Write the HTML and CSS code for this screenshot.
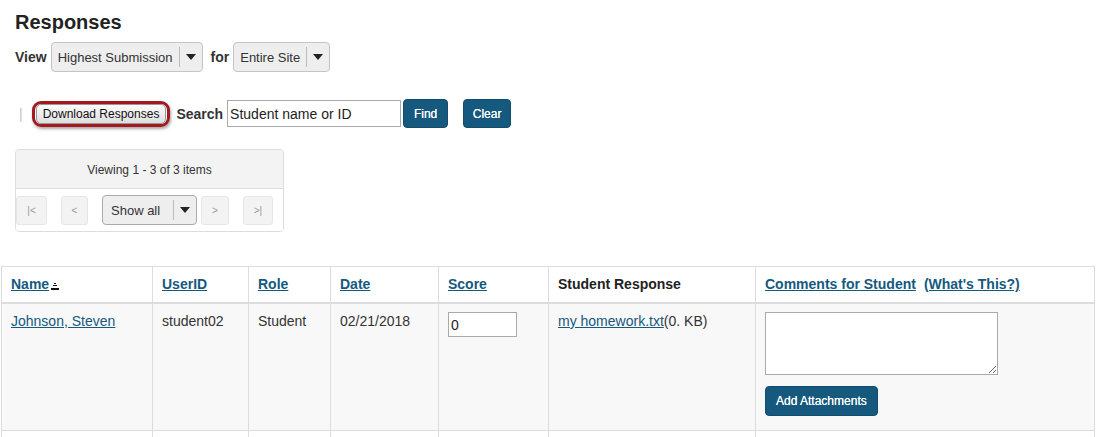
FILE: index.html
```html
<!DOCTYPE html>
<html>
<head>
<meta charset="utf-8">
<title>Responses</title>
<link rel="stylesheet" href="styles.css">
</head>
<body>
<div class="top">
  <h1 class="title">Responses</h1>
  <div class="viewrow">
    <span class="lbl">View</span>
    <div class="sel"><span class="sel-text">Highest Submission</span><span class="sel-arrow"></span></div>
    <span class="lbl">for</span>
    <div class="sel"><span class="sel-text">Entire Site</span><span class="sel-arrow"></span></div>
  </div>
  <div class="actions">
    <span class="sep">|</span>
    <span class="hl"><button class="dl">Download Responses</button></span>
    <span class="lbl search-lbl">Search</span>
    <input class="search" type="text" value="Student name or ID">
    <button class="btn find">Find</button>
    <button class="btn clear">Clear</button>
  </div>
  <div class="pager">
    <div class="pager-head">Viewing 1 - 3 of 3 items</div>
    <div class="pager-nav">
      <span class="pbtn w31">|&lt;</span>
      <span class="pbtn w27">&lt;</span>
      <div class="sel psel"><span class="sel-text">Show all</span><span class="sel-arrow"></span></div>
      <span class="pbtn w28 next">&gt;</span>
      <span class="pbtn w30 last">&gt;|</span>
    </div>
  </div>
</div>
<table class="grid">
  <colgroup>
    <col class="c1"><col class="c2"><col class="c3"><col class="c4"><col class="c5"><col class="c6"><col class="c7">
  </colgroup>
  <thead>
    <tr>
      <th><a href="#">Name</a><svg class="sort" width="8" height="7" viewBox="0 0 8 7"><rect x="3" y="0" width="2" height="1" fill="#111"/><rect x="2" y="2" width="4" height="1" fill="#111"/><rect x="0" y="5" width="8" height="2" fill="#111"/></svg></th>
      <th><a href="#">UserID</a></th>
      <th><a href="#">Role</a></th>
      <th><a href="#">Date</a></th>
      <th><a href="#">Score</a></th>
      <th class="plain">Student Response</th>
      <th><a href="#">Comments for Student</a><a href="#" class="whats">(What's This?)</a></th>
    </tr>
  </thead>
  <tbody>
    <tr class="row">
      <td><a href="#">Johnson, Steven</a></td>
      <td>student02</td>
      <td>Student</td>
      <td>02/21/2018</td>
      <td><input class="score" type="text" value="0"></td>
      <td><a href="#">my homework.txt</a>(0. KB)</td>
      <td><textarea class="comment"></textarea><button class="btn attach">Add Attachments</button></td>
    </tr>
    <tr class="row2">
      <td></td><td></td><td></td><td></td><td></td><td></td><td></td>
    </tr>
  </tbody>
</table>
</body>
</html>
```

FILE: styles.css
```css
html, body {
  margin: 0;
  padding: 0;
  background: #fff;
  font-family: "Liberation Sans", Arial, sans-serif;
  color: #333;
  font-size: 14px;
}

.top {
  padding-left: 15px;
}

.title {
  margin: 10px 0 0;
  font-size: 20px;
  line-height: 24px;
  font-weight: bold;
  color: #222;
}

.viewrow {
  display: flex;
  align-items: center;
  height: 30px;
  margin-top: 8px;
}

.lbl {
  font-weight: bold;
  font-size: 14px;
  color: #333;
  margin-right: 4px;
}

.sel {
  display: inline-flex;
  align-items: center;
  height: 30px;
  box-sizing: border-box;
  border: 1px solid #c4c4c4;
  border-radius: 4px;
  background: #eee;
  font-size: 13px;
  color: #333;
  margin-right: 8px;
  flex-shrink: 0;
}

.sel-text {
  padding: 0 6px;
  white-space: nowrap;
}

.sel-arrow {
  width: 22px;
  height: 20px;
  border-left: 1px solid #bbb;
  display: flex;
  align-items: center;
  justify-content: center;
}

.sel-arrow::after {
  content: "";
  border-left: 5px solid transparent;
  border-right: 5px solid transparent;
  border-top: 6px solid #222;
}

.actions {
  display: flex;
  align-items: center;
  height: 29px;
  margin-top: 27px;
}

.sep {
  color: #c9c0b6;
  font-size: 14px;
  margin-left: 4px;
  margin-right: 9px;
}

.hl {
  display: inline-flex;
  padding: 0 1px;
  border: 3px solid #a2191f;
  border-radius: 9px;
  box-shadow: 1px 2px 3px rgba(0, 0, 0, 0.35);
  margin-right: 6px;
}

.dl {
  font-family: "Liberation Sans", Arial, sans-serif;
  font-size: 12px;
  line-height: 14px;
  padding: 2px 6px;
  border: 1px solid #999;
  border-radius: 5px;
  background: linear-gradient(#fdfdfd, #dedede);
  color: #111;
  margin: 0;
}

.search-lbl {
  margin-right: 4px;
}

.search {
  width: 174px;
  height: 27px;
  box-sizing: border-box;
  border: 1px solid #aaa;
  padding: 0 2px;
  font-family: "Liberation Sans", Arial, sans-serif;
  font-size: 14px;
  color: #222;
  margin: 0 2px 0 0;
}

.btn {
  font-family: "Liberation Sans", Arial, sans-serif;
  font-size: 12px;
  color: #fff;
  background: #15597e;
  border: 1px solid #124d6e;
  border-radius: 4px;
  height: 29px;
  padding: 0 10px;
  margin: 0;
  text-shadow: 0 0 0.4px #fff;
}

.find {
  width: 45px;
  padding: 0;
}

.clear {
  margin-left: 15px;
  width: 48px;
  padding: 0;
}

.pager {
  margin-top: 21px;
  width: 269px;
  box-sizing: border-box;
  border: 1px solid #ddd;
  border-radius: 4px;
  overflow: hidden;
}

.pager-head {
  background: #f3f3f3;
  border-bottom: 1px solid #ddd;
  height: 38px;
  line-height: 40px;
  text-align: center;
  font-size: 12px;
  color: #333;
}

.pager-nav {
  display: flex;
  align-items: center;
  padding: 6px 0 6px;
  background: #fff;
}

.pbtn {
  display: inline-flex;
  align-items: center;
  justify-content: center;
  flex-shrink: 0;
  height: 29px;
  box-sizing: border-box;
  background: #f3f3f3;
  border: 1px solid #e6e6e6;
  border-radius: 3px;
  color: #999;
  font-size: 10px;
  margin-right: 14px;
}

.pbtn.last {
  margin-right: 0;
}

.w31 { width: 31px; }
.w30 { width: 30px; }
.w27 { width: 27px; }
.w28 { width: 28px; }

.psel {
  width: 95px;
  height: 30px;
  border-color: #aaa;
  margin-right: 4px;
}

.psel .sel-text {
  flex: 1;
  padding-left: 8px;
  font-size: 13px;
}

.grid {
  margin: 34px 0 0 1px;
  width: 1093px;
  border-collapse: collapse;
  table-layout: fixed;
  font-size: 14px;
}

.c1 { width: 151px; }
.c2 { width: 96px; }
.c3 { width: 82px; }
.c4 { width: 108px; }
.c5 { width: 110px; }
.c6 { width: 207px; }
.c7 { width: 339px; }

.grid th,
.grid td {
  border: 1px solid #ddd;
  padding: 8px 9px;
  line-height: 20px;
  text-align: left;
  vertical-align: top;
}

.grid th {
  font-weight: bold;
  background: #fff;
  border-bottom: 2px solid #ddd;
  white-space: nowrap;
  padding-top: 7px;
}

.grid th.plain {
  color: #222;
}

.grid a {
  color: #15597e;
  text-decoration: underline;
}

.whats {
  margin-left: 8px;
}

.sort {
  margin-left: 2px;
  vertical-align: -1px;
}

.row td {
  background: #f8f8f8;
  color: #333;
  padding-top: 7px;
  padding-bottom: 14px;
}

.score {
  display: block;
  width: 69px;
  height: 25px;
  box-sizing: border-box;
  border: 1px solid #aaa;
  padding: 0 2px;
  margin: 1px 0 0;
  font-family: "Liberation Sans", Arial, sans-serif;
  font-size: 14px;
  color: #222;
}

.comment {
  display: block;
  width: 233px;
  height: 63px;
  box-sizing: border-box;
  border: 1px solid #aaa;
  margin: 1px 0 0;
  resize: both;
}

.attach {
  display: block;
  margin-top: 11px;
  height: 30px;
  padding: 0 10px;
}

.row2 td {
  height: 30px;
  background: #fff;
}
```
